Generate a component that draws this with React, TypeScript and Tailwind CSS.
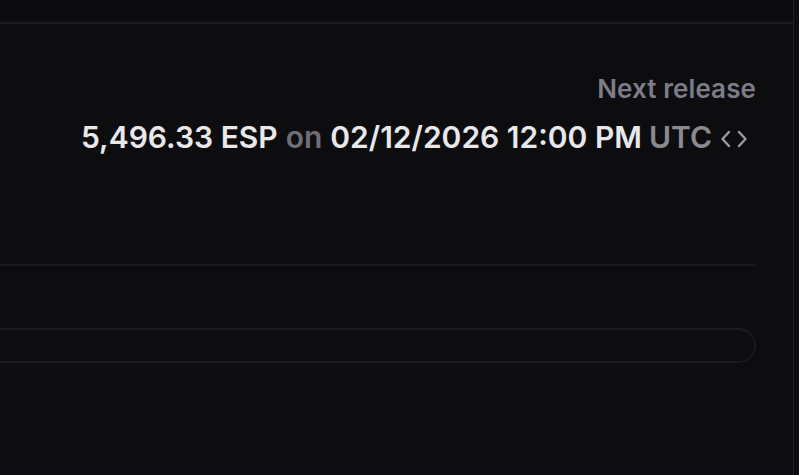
export default function App() {
    return (
        <div className="flex w-[799px] h-[475px] bg-[#0d0d10] font-['Inter',sans-serif] overflow-hidden">
            <div className="flex flex-col w-[794px] border-r border-[#202024]">
                <div className="h-[24px] border-b-2 border-[#1c1c20] bg-[#0b0b0e]" />
                <div className="flex flex-col pr-[37px]">
                    <div className="flex flex-col items-end pt-[48px] h-[240px]">
                        <span className="text-[26px] leading-[34px] font-semibold text-[#7d7d88] tracking-[0.1px]">Next release</span>
                        <div className="flex items-center mt-[12px] text-[30px] leading-[38px] font-semibold">
                            <span className="text-[#e8e8ea]">5,496.33 ESP</span>
                            <span className="text-[#6e6e75] mx-[8px]">on</span>
                            <span className="text-[#e8e8ea]">02/12/2026 12:00 PM</span>
                            <span className="text-[#8a8a90] ml-[7px]">UTC</span>
                            <svg width="28" height="22" viewBox="0 0 28 22" className="ml-[8px] mr-[8px] mt-[4px]" fill="none" stroke="#9a9aa0" strokeWidth="2.4" strokeLinecap="round" strokeLinejoin="round">
                                <path d="M9 4 L2.5 11 L9 18" />
                                <path d="M19 4 L25.5 11 L19 18" />
                            </svg>
                        </div>
                    </div>
                    <div className="h-[2px] bg-[#1a1a1e]" />
                    <div className="h-[35px] mt-[62px] rounded-r-full border-2 border-l-0 border-[#1b1b1f]" />
                </div>
            </div>
        </div>
    )
}
